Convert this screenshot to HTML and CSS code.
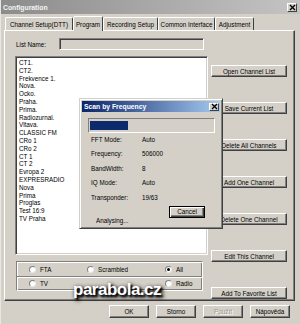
FILE: index.html
```html
<!DOCTYPE html>
<html>
<head>
<meta charset="utf-8">
<link rel="stylesheet" href="styles.css">
</head>
<body>
<div class="win">
  <div class="title">
    <span class="ttext">Configuration</span>
    <span class="xbtn"><svg width="7" height="7" viewBox="0 0 7 7"><path d="M1 1L6 6M6 1L1 6" stroke="#000" stroke-width="1.3"/></svg></span>
  </div>
  <div class="tabs">
    <div class="tab w1">Channel Setup(DTT)</div>
    <div class="tab sel w2">Program</div>
    <div class="tab w3">Recording Setup</div>
    <div class="tab w4">Common Interface</div>
    <div class="tab w5">Adjustment</div>
  </div>
  <div class="panel">
    <div class="left">
      <div class="namerow"><span class="lbl">List Name:</span><div class="input"></div></div>
      <div class="list">
        <div>CT1.</div>
        <div>CT2.</div>
        <div>Frekvence 1.</div>
        <div>Nova.</div>
        <div>Ocko.</div>
        <div>Praha.</div>
        <div>Prima.</div>
        <div>Radiozurnal.</div>
        <div>Vltava.</div>
        <div>CLASSIC FM</div>
        <div>CRo 1</div>
        <div>CRo 2</div>
        <div>CT 1</div>
        <div>CT 2</div>
        <div>Evropa 2</div>
        <div>EXPRESRADIO</div>
        <div>Nova</div>
        <div>Prima</div>
        <div>Proglas</div>
        <div>Test 16:9</div>
        <div>TV Praha</div>
      </div>
      <div class="group">
        <div class="grow">
          <span class="opt c1"><i class="radio"></i>FTA</span>
          <span class="opt c2"><i class="radio"></i>Scrambled</span>
          <span class="opt"><i class="radio on"></i>All</span>
        </div>
        <div class="grow">
          <span class="opt c1"><i class="radio"></i>TV</span>
          <span class="opt c2"></span>
          <span class="opt"><i class="radio"></i>Radio</span>
        </div>
      </div>
    </div>
    <div class="right">
      <div class="btn side">Open Channel List</div>
      <div class="btn side">Save Current List</div>
      <div class="btn side">Delete All Channels</div>
      <div class="btn side">Add One Channel</div>
      <div class="btn side">Delete One Channel</div>
      <div class="btn side">Edit This Channel</div>
      <div class="btn side">Add To Favorite List</div>
    </div>
  </div>
  <div class="footer">
    <div class="btn fb">OK</div>
    <div class="btn fb">Storno</div>
    <div class="btn fb dis">Použít</div>
    <div class="btn fb">Nápověda</div>
  </div>

  <div class="dialog">
    <div class="dtitle">
      <span>Scan by Frequency</span>
      <span class="xbtn dx"><svg width="7" height="7" viewBox="0 0 7 7"><path d="M1 1L6 6M6 1L1 6" stroke="#000" stroke-width="1.3"/></svg></span>
    </div>
    <div class="progress"><div class="fill" style="width:31%"></div></div>
    <div class="rows">
      <div class="row"><span class="k">FFT Mode:</span><span>Auto</span></div>
      <div class="row"><span class="k">Frequency:</span><span>506000</span></div>
      <div class="row"><span class="k">BandWidth:</span><span>8</span></div>
      <div class="row"><span class="k">IQ Mode:</span><span>Auto</span></div>
      <div class="row"><span class="k">Transponder:</span><span>19/63</span></div>
    </div>
    <div class="dfoot">
      <span class="status">Analysing...</span>
      <div class="btn cancel">Cancel</div>
    </div>
  </div>

  <div class="wm">parabola.cz</div>
</div>
</body>
</html>
```
FILE: styles.css
```css
* { box-sizing: border-box; }
html, body { margin: 0; padding: 0; }
body { background: #d4d0c8; }

.win {
  position: relative;
  width: 300px;
  height: 324px;
  background: #d4d0c8;
  font-family: "Liberation Sans", Arial, sans-serif;
  font-size: 6.3px;
  color: #000;
  overflow: hidden;
  border-left: 1px solid #e8e6e2;
}

.title {
  height: 14px;
  display: flex;
  align-items: center;
  justify-content: space-between;
  padding: 0 3px 0 2px;
  background: linear-gradient(to right, #8c8c8c, #c4c4c4);
  color: #f4f4f4;
  font-weight: bold;
  font-size: 6.8px;
}

.xbtn {
  width: 10px;
  height: 9px;
  display: flex;
  align-items: center;
  justify-content: center;
  background: #d4d0c8;
  border: 1px solid;
  border-color: #fff #404040 #404040 #fff;
}

.tabs {
  display: flex;
  height: 16px;
  padding: 3px 0 0 4px;
  align-items: flex-end;
}
.tab {
  height: 13px;
  display: flex;
  align-items: center;
  justify-content: center;
  border: 1px solid;
  border-bottom: none;
  border-color: #fff #404040 transparent #fff;
  border-radius: 2px 2px 0 0;
  white-space: nowrap;
}
.tab.sel {
  height: 15px;
  margin-bottom: -1px;
  background: #d4d0c8;
  position: relative;
  z-index: 1;
}
.w1 { width: 68px; }
.w2 { width: 30px; }
.w3 { width: 55px; }
.w4 { width: 57px; }
.w5 { width: 39px; }

.panel {
  margin: 0 5px 0 3px;
  height: 271px;
  border: 1px solid;
  border-color: #fff #404040 #404040 #fff;
  box-shadow: inset -1px -1px #808080;
  display: flex;
  gap: 3px;
  padding: 7px 0 0 10px;
}

.left { width: 193px; display: flex; flex-direction: column; }
.namerow { display: flex; align-items: center; height: 12px; padding-left: 1px; }
.lbl { width: 43px; }
.input {
  width: 145px;
  height: 12px;
  border: 1px solid;
  border-color: #808080 #fff #fff #808080;
  box-shadow: inset 1px 1px #404040;
}

.list {
  margin-top: 6px;
  height: 199px;
  background: #fff;
  border: 1px solid;
  border-color: #808080 #fff #fff #808080;
  box-shadow: inset 1px 1px #404040, inset -1px -1px #d4d0c8;
  padding: 2px 0 0 3px;
  line-height: 7.8px;
}

.group {
  margin: 6px 0 0 1px;
  width: 187px;
  border: 1px solid;
  border-color: #808080 #fff #fff #808080;
  box-shadow: inset 1px 1px #fff, inset -1px -1px #808080;
}
.grow {
  height: 14px;
  display: flex;
  align-items: center;
  padding-left: 12px;
}
.grow + .grow { border-top: 1px solid #808080; box-shadow: inset 0 1px #fff; }
.opt { display: flex; align-items: center; gap: 4px; }
.c1 { width: 58px; }
.c2 { width: 78px; }
.radio {
  display: inline-flex;
  align-items: center;
  justify-content: center;
  width: 7px;
  height: 7px;
  border-radius: 50%;
  background: #fff;
  border: 1px solid;
  border-color: #808080 #e8e8e8 #e8e8e8 #808080;
}
.radio.on::after {
  content: "";
  width: 3px;
  height: 3px;
  border-radius: 50%;
  background: #000;
}

.right {
  display: flex;
  flex-direction: column;
  gap: 25px;
  padding-top: 27px;
}
.btn {
  display: flex;
  align-items: center;
  justify-content: center;
  border: 1px solid;
  border-color: #fff #404040 #404040 #fff;
  box-shadow: inset -1px -1px #808080;
  white-space: nowrap;
}
.side { width: 76px; height: 12px; }

.footer {
  display: flex;
  justify-content: flex-end;
  gap: 7px;
  padding: 4px 10px 0 0;
}
.fb { width: 40px; height: 13px; }
.dis { color: #9a968e; text-shadow: 1px 1px #fff; }

.dialog {
  position: absolute;
  left: 78px;
  top: 98px;
  width: 144px;
  height: 131px;
  background: #d4d0c8;
  border: 1px solid;
  border-color: #d4d0c8 #404040 #404040 #d4d0c8;
  box-shadow: inset 1px 1px #fff, inset -1px -1px #808080;
  padding: 2px;
}
.dtitle {
  height: 11px;
  display: flex;
  align-items: center;
  justify-content: space-between;
  padding: 0 1px 0 2px;
  background: linear-gradient(to right, #0a246a, #a6caf0);
  color: #fff;
  font-weight: bold;
  font-size: 6.8px;
}
.dx { height: 8px; width: 10px; }
.progress {
  margin: 6px 0 0 6px;
  width: 127px;
  height: 15px;
  border: 1px solid;
  border-color: #808080 #fff #fff #808080;
  padding: 2px 1px;
}
.fill { height: 100%; background: #0c2a6c; }
.rows { margin-top: -1px; }
.row { height: 14.5px; display: flex; align-items: center; padding-left: 9px; }
.k { width: 51px; }
.dfoot {
  display: flex;
  justify-content: space-between;
  align-items: flex-start;
  padding: 1px 15px 0 14px;
}
.status { margin-top: 11px; }
.cancel {
  width: 36px;
  height: 12px;
  border: 1px solid #000;
  box-shadow: inset 1px 1px #fff, inset -1px -1px #404040, inset -2px -2px #808080;
}

.wm {
  position: absolute;
  left: 72px;
  top: 280px;
  font-size: 17px;
  font-weight: bold;
  color: #fff;
  letter-spacing: -0.5px;
  text-shadow: 2px 2px 2px #000, 1px 1px 4px #000, 3px 3px 4px rgba(0,0,0,.7);
}
```
